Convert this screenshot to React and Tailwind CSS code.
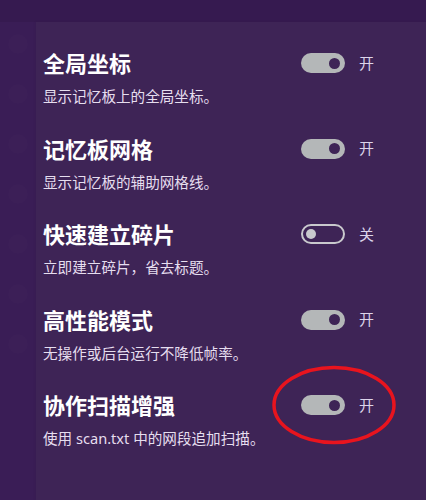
import React from 'react';

const settings = [
  { title: '全局坐标', desc: '显示记忆板上的全局坐标。', on: true },
  { title: '记忆板网格', desc: '显示记忆板的辅助网格线。', on: true },
  { title: '快速建立碎片', desc: '立即建立碎片，省去标题。', on: false },
  { title: '高性能模式', desc: '无操作或后台运行不降低帧率。', on: true },
  { title: '协作扫描增强', desc: '使用 scan.txt 中的网段追加扫描。', on: true },
];

function Toggle({ on }) {
  if (on) {
    return (
      <div className="w-[44px] h-[20px] rounded-full bg-[#b4b7b8] flex items-center justify-end pr-[5px]">
        <div className="w-[11px] h-[11px] rounded-full bg-[#3e2456]" />
      </div>
    );
  }
  return (
    <div className="w-[44px] h-[20px] rounded-full border-2 border-[#c9c9cd] flex items-center pl-[3px]">
      <div className="w-[10px] h-[10px] rounded-full bg-[#c9c9cd]" />
    </div>
  );
}

export default function App() {
  return (
    <div
      className="relative w-full h-[500px] bg-[#371b52] flex flex-col overflow-hidden"
      style={{ fontFamily: '"Noto Sans", "Noto Sans CJK SC", sans-serif' }}
    >
      <div className="h-[22px] shrink-0 bg-[#361a50]" />
      <div className="flex flex-1">
        {/* faint sidebar */}
        <div className="w-[36px] shrink-0 bg-[#3a1d56] flex flex-col items-center pt-[12px] gap-[30px]">
          {[0, 1, 2, 3, 4, 5, 6].map(i => (
            <div key={i} className="w-[20px] h-[20px] rounded-full bg-white/[0.012]" />
          ))}
        </div>
        <div className="flex-1 bg-[#3e2456] pl-[7px] pt-[27px] flex flex-col gap-[28.5px] shadow-[-1px_0_3px_rgba(0,0,0,0.05)]">
          {settings.map((s, i) => (
            <div key={i} className="flex flex-col">
              <div className="flex items-center h-[28px]">
                <div className="text-[22px] leading-[28px] font-bold text-white">{s.title}</div>
                <div className="ml-auto flex items-center pr-[52px]">
                  <Toggle on={s.on} />
                  <span className="ml-[14px] text-[15px] text-[#dcd4ea]">{s.on ? '开' : '关'}</span>
                </div>
              </div>
              <div className="mt-[9px] text-[14.6px] leading-[20px] text-[#e6deef]">{s.desc}</div>
            </div>
          ))}
        </div>
      </div>
      <svg className="absolute left-0 top-0 pointer-events-none" width="426" height="500">
        <ellipse cx="334" cy="405" rx="60" ry="37.5" fill="none" stroke="#e8141e" strokeWidth="3.5" />
      </svg>
    </div>
  );
}
